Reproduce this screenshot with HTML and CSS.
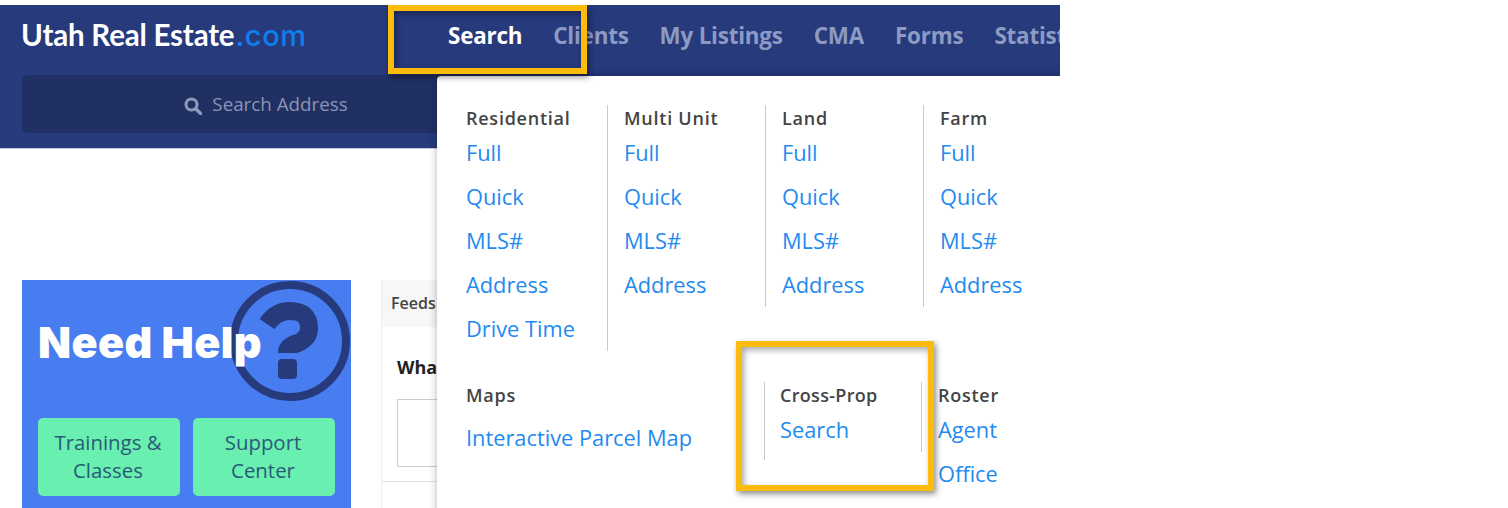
FILE: index.html
```html
<!DOCTYPE html>
<html lang="en">
<head>
    <meta charset="UTF-8">
    <title>Utah Real Estate</title>
    <link rel="stylesheet" href="styles.css">
</head>
<body>
<section class="shot">
    <header class="top">
        <div class="bar">
            <a class="logo">Utah Real Estate<span>.com</span></a>
            <nav class="nav">
                <a class="active">Search</a>
                <a>Clients</a>
                <a>My Listings</a>
                <a>CMA</a>
                <a>Forms</a>
                <a>Statistics</a>
            </nav>
        </div>
        <div class="search">
            <svg class="search-icon" width="18" height="18" viewBox="0 0 18 18">
                <circle cx="7.5" cy="7.5" r="5.5" fill="none" stroke="#8f9aba" stroke-width="3"/>
                <path d="M11.5 11.5l5 5" stroke="#8f9aba" stroke-width="3.4" stroke-linecap="round"/>
            </svg>
            <span>Search Address</span>
        </div>
    </header>

    <div class="main">
        <aside class="help">
            <svg class="help-mark" width="120" height="122" viewBox="0 0 120 122">
                <circle cx="60" cy="61" r="56" fill="none" stroke="#263a7c" stroke-width="8"/>
                <path d="M37 44Q46 31 60 31Q79 31 79 48Q79 58 68 63Q57 66 57 73" fill="none" stroke="#263a7c" stroke-width="18"/>
                <rect x="48" y="79" width="19" height="20" rx="4" fill="#263a7c"/>
            </svg>
            <h2>Need Help</h2>
            <div class="help-btns">
                <a>Trainings &amp; Classes</a>
                <a>Support Center</a>
            </div>
        </aside>
        <div class="feed">
            <div class="feed-head">Feeds</div>
            <div class="feed-body">
                <b>What's new</b>
                <div class="feed-input"></div>
            </div>
        </div>
    </div>

    <div class="menu">
        <div class="menu-row">
            <div class="col long">
                <h4>Residential</h4>
                <a>Full</a><a>Quick</a><a>MLS#</a><a>Address</a><a>Drive Time</a>
            </div>
            <div class="col">
                <h4>Multi Unit</h4>
                <a>Full</a><a>Quick</a><a>MLS#</a><a>Address</a>
            </div>
            <div class="col">
                <h4>Land</h4>
                <a>Full</a><a>Quick</a><a>MLS#</a><a>Address</a>
            </div>
            <div class="col last">
                <h4>Farm</h4>
                <a>Full</a><a>Quick</a><a>MLS#</a><a>Address</a>
            </div>
        </div>
        <div class="menu-row second">
            <div class="col maps">
                <h4>Maps</h4>
                <a>Interactive Parcel Map</a>
            </div>
            <div class="col cross">
                <h4>Cross-Prop</h4>
                <a>Search</a>
            </div>
            <div class="col last">
                <h4>Roster</h4>
                <a>Agent</a><a>Office</a>
            </div>
        </div>
    </div>

    <div class="mark mark-nav"></div>
    <div class="mark mark-cross"></div>
</section>
</body>
</html>
```

FILE: styles.css
```css
html,body{ margin:0; padding:0; background:#fff; }
body{ font-family:"Open Sans","Liberation Sans",sans-serif; }
h2,h4{ margin:0; }

.shot{ width:1060px; height:503px; margin-top:5px; position:relative; overflow:hidden; }

/* header */
.top{ background:#263a7c; height:144px; border-bottom:1px solid #c5cbdc; box-sizing:border-box; }
.bar{ display:flex; height:70px; }
.logo{
    flex:none;
    width:448px;
    padding:12px 0 0 21px;
    box-sizing:border-box;
    font:700 29.5px/36px Lato,sans-serif;
    color:#fff;
    letter-spacing:-.2px;
    white-space:nowrap;
}
.logo span{ color:#0f7fee; font-family:Inter,sans-serif; font-weight:500; font-size:29px; letter-spacing:.6px; margin-left:1px; }
.nav{ display:flex; gap:31px; padding-top:13px; white-space:nowrap; font-size:22.4px; line-height:36px; font-weight:700; color:#8d9ac3; letter-spacing:-.2px; }
.nav .active{ color:#fff; }
.search{
    margin-left:22px;
    width:488px;
    height:58px;
    background:#203063;
    border-radius:6px;
    display:flex;
    align-items:center;
    justify-content:center;
    gap:10px;
    box-sizing:border-box;
    color:#8a94b5;
    font-size:18.8px;
}
.search-icon{ margin-top:3px; }

/* under the header */
.main{ display:flex; gap:30px; padding:131px 0 0 22px; }
.help{ width:329px; height:240px; background:#477df0; position:relative; flex:none; }
.help-mark{ position:absolute; top:0; right:1px; }
.help h2{ position:relative; padding:35px 0 0 16px; font:900 43px/54px Inter,sans-serif; color:#fff; letter-spacing:.4px; }
.help-btns{ display:flex; gap:13px; padding:49px 0 0 16px; }
.help-btns a{
    width:142px;
    height:78px;
    padding:0 12px 2px 10px;
    box-sizing:border-box;
    background:#69efaf;
    border-radius:5px;
    display:flex;
    align-items:center;
    text-align:center;
    justify-content:center;
    color:#2a5a78;
    font-size:20.4px;
    line-height:28px;
}
.feed{ flex:1; border-left:1px solid #eee; }
.feed-head{ height:47px; background:#f7f7f7; padding-left:9px; font-size:16px; line-height:47px; font-weight:600; color:#444; }
.feed-body{ padding:24px 15px 14px; border-bottom:1px solid #dfe3ea; }
.feed-body b{ display:block; font-size:18px; line-height:32px; color:#222; }
.feed-input{ margin-top:16px; height:66px; border:1px solid #ccc; }

/* dropdown */
.menu{
    position:absolute;
    left:437px;
    top:71px;
    width:640px;
    height:440px;
    padding:29px 0 0 29px;
    box-sizing:border-box;
    background:#fff;
    border-radius:4px 0 0 0;
    box-shadow:0 0 8px rgba(0,0,0,.3);
}
.menu-row{ display:flex; align-items:flex-start; }
.menu-row.second{ margin-top:31px; }
.col{ flex:none; width:141px; margin-right:16px; min-height:200px; border-right:1px solid #c9c9c9; }
.col.long{ min-height:244px; }
.col.last{ border-right:0; margin-right:0; }
.col h4{ font-size:18px; line-height:26px; font-weight:600; color:#444; letter-spacing:.75px; }
.col a{ display:block; font-size:21.8px; line-height:44px; color:#1f8aef; white-space:nowrap; }
.maps{ width:298px; min-height:78px; margin:0; }
.maps a{ margin-top:8px; }
.cross{ min-height:70px; padding-left:15px; }
.cross h4{ letter-spacing:.3px; }

/* yellow call-outs */
.mark{ position:absolute; border:6px solid #fdbb0b; box-sizing:border-box; box-shadow:2px 3px 6px rgba(0,0,0,.45), inset 2px 3px 6px rgba(0,0,0,.35); }
.mark-nav{ left:388px; top:0; width:199px; height:69px; }
.mark-cross{ left:736px; top:336px; width:198px; height:150px; }
```
